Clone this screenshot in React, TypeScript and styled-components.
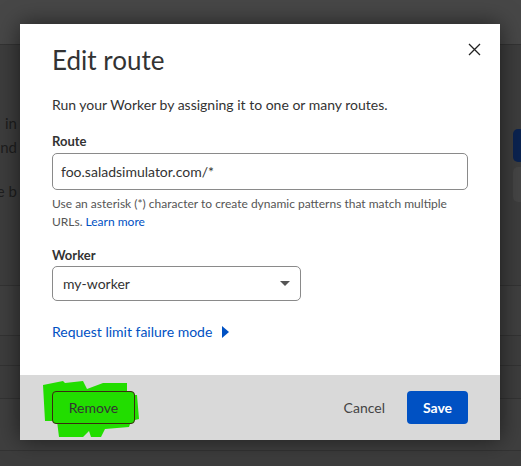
import styled, { createGlobalStyle } from "styled-components";

const GlobalStyle = createGlobalStyle`
  html, body {
    margin: 0;
    padding: 0;
    background: #3d3d3d;
    font-family: Lato, "Open Sans", sans-serif;
  }
  * { box-sizing: border-box; }
`;

const Page = styled.div`
  position: relative;
  width: 521px;
  height: 466px;
  overflow: hidden;
  background: #3d3d3d;
`;

const TopBar = styled.div`
  height: 45px;
  background: #474747;
  border-bottom: 1px solid #333;
`;

const Body = styled.div`
  display: flex;
  justify-content: space-between;
  height: 241px;
  border-bottom: 1px solid #333;
`;

const EdgeText = styled.div`
  width: 20px;
  overflow: hidden;
  display: flex;
  flex-direction: column;
  align-items: flex-end;
  padding-top: 66px;
  padding-right: 3px;
  color: #1e1e1e;
  font-size: 15px;
  line-height: 24px;
  p {
    margin: 0;
    white-space: nowrap;
  }
  p.gap {
    margin-top: 20px;
  }
`;

const EdgeButtons = styled.div`
  width: 8px;
  padding-top: 84px;
  display: flex;
  flex-direction: column;
  gap: 5px;
`;

const GhostButton = styled.div<{ $blue?: boolean }>`
  height: ${(p) => (p.$blue ? 33 : 35)}px;
  border-radius: 5px 0 0 5px;
  background: ${(p) => (p.$blue ? "#0b2350" : "#454545")};
`;

const Row = styled.div<{ $h: number; $shade?: string }>`
  height: ${(p) => p.$h}px;
  background: ${(p) => p.$shade || "#3d3d3d"};
  border-bottom: 1px solid #333;
`;

const Modal = styled.div`
  position: absolute;
  left: 20px;
  top: 24px;
  width: 480px;
  height: 416px;
  background: #fff;
  box-shadow: 0 0 22px rgba(0, 0, 0, 0.55);
  display: flex;
  flex-direction: column;
  color: #333;
`;

const Content = styled.div`
  flex: 1;
  padding: 19px 32px 0 32px;
  position: relative;
`;

const Title = styled.h2`
  margin: 0;
  font-weight: 400;
  font-size: 26px;
  line-height: 34px;
  color: #333;
`;

const CloseButton = styled.button`
  position: absolute;
  right: 18px;
  top: 17px;
  width: 16px;
  height: 16px;
  padding: 0;
  border: 0;
  background: none;
  display: flex;
  align-items: center;
  justify-content: center;
`;

const Description = styled.p`
  margin: 18px 0 0;
  font-size: 14px;
  line-height: 20px;
`;

const Label = styled.div<{ $gap: number }>`
  margin-top: ${(p) => p.$gap}px;
  font-size: 13px;
  font-weight: 700;
  line-height: 18px;
  color: #333;
`;

const Input = styled.div`
  margin-top: 3px;
  height: 37px;
  border: 1px solid #8a8a8a;
  border-radius: 5px;
  display: flex;
  align-items: center;
  padding: 0 8px;
  font-size: 14px;
  color: #333;
`;

const Help = styled.p`
  margin: 5px 0 0;
  font-size: 12px;
  line-height: 18px;
  color: #555;
  a {
    color: #0051c3;
    text-decoration: none;
  }
`;

const Select = styled.div`
  margin-top: 2px;
  width: 249px;
  height: 35px;
  border: 1px solid #8a8a8a;
  border-radius: 5px;
  display: flex;
  align-items: center;
  justify-content: space-between;
  padding: 0 10px 0 10px;
  font-size: 14px;
`;

const Caret = styled.span`
  width: 0;
  height: 0;
  border-left: 5px solid transparent;
  border-right: 5px solid transparent;
  border-top: 5px solid #555;
`;

const LinkRow = styled.div`
  margin-top: 22px;
  display: flex;
  align-items: center;
  gap: 10px;
  font-size: 14px;
  color: #0051c3;
`;

const PlayTri = styled.span`
  width: 0;
  height: 0;
  border-top: 6px solid transparent;
  border-bottom: 6px solid transparent;
  border-left: 7px solid #0051c3;
`;

const Footer = styled.div`
  height: 65px;
  background: #d9d9d9;
  display: flex;
  align-items: center;
  padding: 0 32px;
`;

const RemoveWrap = styled.div`
  position: relative;
`;

const Scribble = styled.svg`
  position: absolute;
  left: -9px;
  top: -10px;
  width: 98px;
  height: 56px;
`;

const RemoveButton = styled.button`
  position: relative;
  height: 33px;
  width: 83px;
  border: 1px solid #3a2a10;
  border-radius: 4px;
  background: #22dd00;
  color: #333;
  font-family: inherit;
  font-size: 14px;
`;

const Spacer = styled.div`
  flex: 1;
`;

const CancelButton = styled.button`
  border: 0;
  background: none;
  font-family: inherit;
  font-size: 14px;
  color: #444;
  margin-right: 22px;
  padding: 0;
`;

const SaveButton = styled.button`
  height: 33px;
  width: 61px;
  border: 0;
  border-radius: 4px;
  background: #0051c3;
  color: #fff;
  font-family: inherit;
  font-size: 14px;
  font-weight: 700;
`;

export default function App() {
  return (
    <>
      <GlobalStyle />
      <Page>
        <TopBar />
        <Body>
          <EdgeText>
            <p>in</p>
            <p>nd</p>
            <p className="gap">e b</p>
          </EdgeText>
          <EdgeButtons>
            <GhostButton $blue />
            <GhostButton />
          </EdgeButtons>
        </Body>
        <Row $h={50} $shade="#3f3f3f" />
        <Row $h={30} />
        <Row $h={33} />
        <Row $h={52} $shade="#3f3f3f" />
        <Modal>
          <Content>
            <Title>Edit route</Title>
            <CloseButton aria-label="Close">
              <svg width="13" height="13" viewBox="0 0 13 13">
                <path d="M1 1 L12 12 M12 1 L1 12" stroke="#222" strokeWidth="1.3" />
              </svg>
            </CloseButton>
            <Description>Run your Worker by assigning it to one or many routes.</Description>
            <Label $gap={17}>Route</Label>
            <Input>foo.saladsimulator.com/*</Input>
            <Help>
              Use an asterisk (*) character to create dynamic patterns that match multiple URLs.{" "}
              <a href="#">Learn more</a>
            </Help>
            <Label $gap={15}>Worker</Label>
            <Select>
              my-worker
              <Caret />
            </Select>
            <LinkRow>
              Request limit failure mode
              <PlayTri />
            </LinkRow>
          </Content>
          <Footer>
            <RemoveWrap>
              <Scribble viewBox="0 0 98 56">
                <path
                  d="M0 4 L20 0 L22 2 L40 0 L44 8 L60 2 L84 2 L84 14 L94 14 L96 38 L88 40 L86 46 L62 48 L58 56 L48 56 L46 50 L40 56 L16 56 L14 40 L2 40 Z"
                  fill="#22dd00"
                />
              </Scribble>
              <RemoveButton>Remove</RemoveButton>
            </RemoveWrap>
            <Spacer />
            <CancelButton>Cancel</CancelButton>
            <SaveButton>Save</SaveButton>
          </Footer>
        </Modal>
      </Page>
    </>
  );
}
